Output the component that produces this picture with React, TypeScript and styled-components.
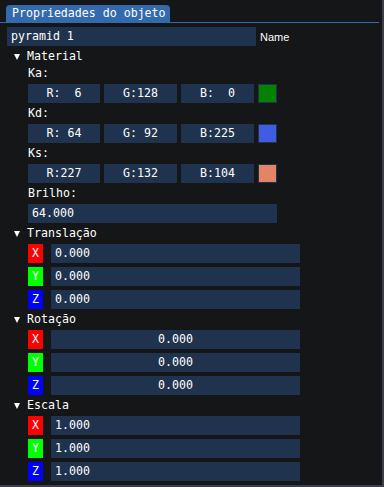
import React from "react";
import styled, {createGlobalStyle} from "styled-components";

const GlobalStyle = createGlobalStyle`
	html, body {
		margin: 0;
		padding: 0;
		background-color: #151617;
	}
	body {
		font-family: "DejaVu Sans Mono", "Liberation Mono", monospace;
		font-size: 11.6px;
		color: #ffffff;
	}
`;

const FRAME = "#20334e";

const Window = styled.div`
	width: 382px;
	height: 485px;
	border-right: 2px solid #3c3d47;
	border-bottom: 2px solid #3c3d47;
	box-sizing: content-box;
	background-color: #151617;
	overflow: hidden;
`;

const TabBar = styled.div`
	display: flex;
	padding: 5px 0 0 3px;
	border-bottom: 1px solid #3369ad;
	margin-right: 3px;
`;

const Tab = styled.div`
	margin-left: 3px;
	height: 17px;
	line-height: 17px;
	padding: 0 4px 0 6px;
	background-color: #3369ad;
	border-radius: 4px 4px 0 0;
	white-space: pre;
`;

const Content = styled.div`
	display: flex;
	flex-direction: column;
	gap: 4px;
	padding: 4px 0 0 7px;
`;

const Row = styled.div<{$gap?: number}>`
	display: flex;
	align-items: center;
	gap: ${p => p.$gap ?? 4}px;
	height: 19px;
`;

const Field = styled.div<{$w: number; $align?: string}>`
	width: ${p => p.$w}px;
	height: 19px;
	line-height: 19px;
	background-color: ${FRAME};
	box-sizing: border-box;
	padding: 0 4px;
	text-align: ${p => p.$align ?? "left"};
	white-space: pre;
`;

const NameLabel = styled.span`
	font-family: "Liberation Sans", Arial, sans-serif;
	font-size: 11px;
`;

const Node = styled.div`
	display: flex;
	align-items: center;
	height: 13px;
	line-height: 13px;
	gap: 7px;
	padding-left: 7px;
`;

const Arrow = styled.span`
	width: 0;
	height: 0;
	border-left: 3.5px solid transparent;
	border-right: 3.5px solid transparent;
	border-top: 6px solid #ffffff;
`;

const Indent = styled.div`
	display: flex;
	flex-direction: column;
	gap: 4px;
	padding-left: 21px;
`;

const Label = styled.div`
	height: 13px;
	line-height: 13px;
`;

const Swatch = styled.div<{$c: string}>`
	width: 19px;
	height: 19px;
	box-sizing: border-box;
	border: 1px solid ${FRAME};
	background-color: ${p => p.$c};
`;

const Axis = styled.div<{$c: string}>`
	width: 15px;
	height: 19px;
	line-height: 19px;
	text-align: center;
	background-color: ${p => p.$c};
`;

const pad3 = (n: number) => String(n).padStart(3, " ");

const ColorRow = ({name, rgb}: {name: string; rgb: [number, number, number]}) => (
	<>
		<Label>{name}</Label>
		<Row>
			<Field $w={72} $align="center">R:{pad3(rgb[0])}</Field>
			<Field $w={73} $align="center">G:{pad3(rgb[1])}</Field>
			<Field $w={73} $align="center">B:{pad3(rgb[2])}</Field>
			<Swatch $c={`rgb(${rgb[0]}, ${rgb[1]}, ${rgb[2]})`} />
		</Row>
	</>
);

const axes: [string, string][] = [
	["X", "#ff0000"],
	["Y", "#00ff00"],
	["Z", "#0000ff"],
];

const VecGroup = ({title, value, centered}: {title: string; value: string; centered?: boolean}) => (
	<>
		<Node>
			<Arrow />
			{title}
		</Node>
		<Indent>
			{axes.map(([a, c]) => (
				<Row key={a} $gap={8}>
					<Axis $c={c}>{a}</Axis>
					<Field $w={249} $align={centered ? "center" : "left"}>{value}</Field>
				</Row>
			))}
		</Indent>
	</>
);

const App = () => {
	return (
		<>
			<GlobalStyle />
			<Window>
				<TabBar>
					<Tab>Propriedades do objeto</Tab>
				</TabBar>
				<Content>
					<Row>
						<Field $w={249}>pyramid 1</Field>
						<NameLabel>Name</NameLabel>
					</Row>
					<Node>
						<Arrow />
						Material
					</Node>
					<Indent>
						<ColorRow name="Ka:" rgb={[6, 128, 0]} />
						<ColorRow name="Kd:" rgb={[64, 92, 225]} />
						<ColorRow name="Ks:" rgb={[227, 132, 104]} />
						<Label>Brilho:</Label>
						<Row>
							<Field $w={249}>64.000</Field>
						</Row>
					</Indent>
					<VecGroup title="Translação" value="0.000" />
					<VecGroup title="Rotação" value="0.000" centered />
					<VecGroup title="Escala" value="1.000" />
				</Content>
			</Window>
		</>
	);
};

export default App;
